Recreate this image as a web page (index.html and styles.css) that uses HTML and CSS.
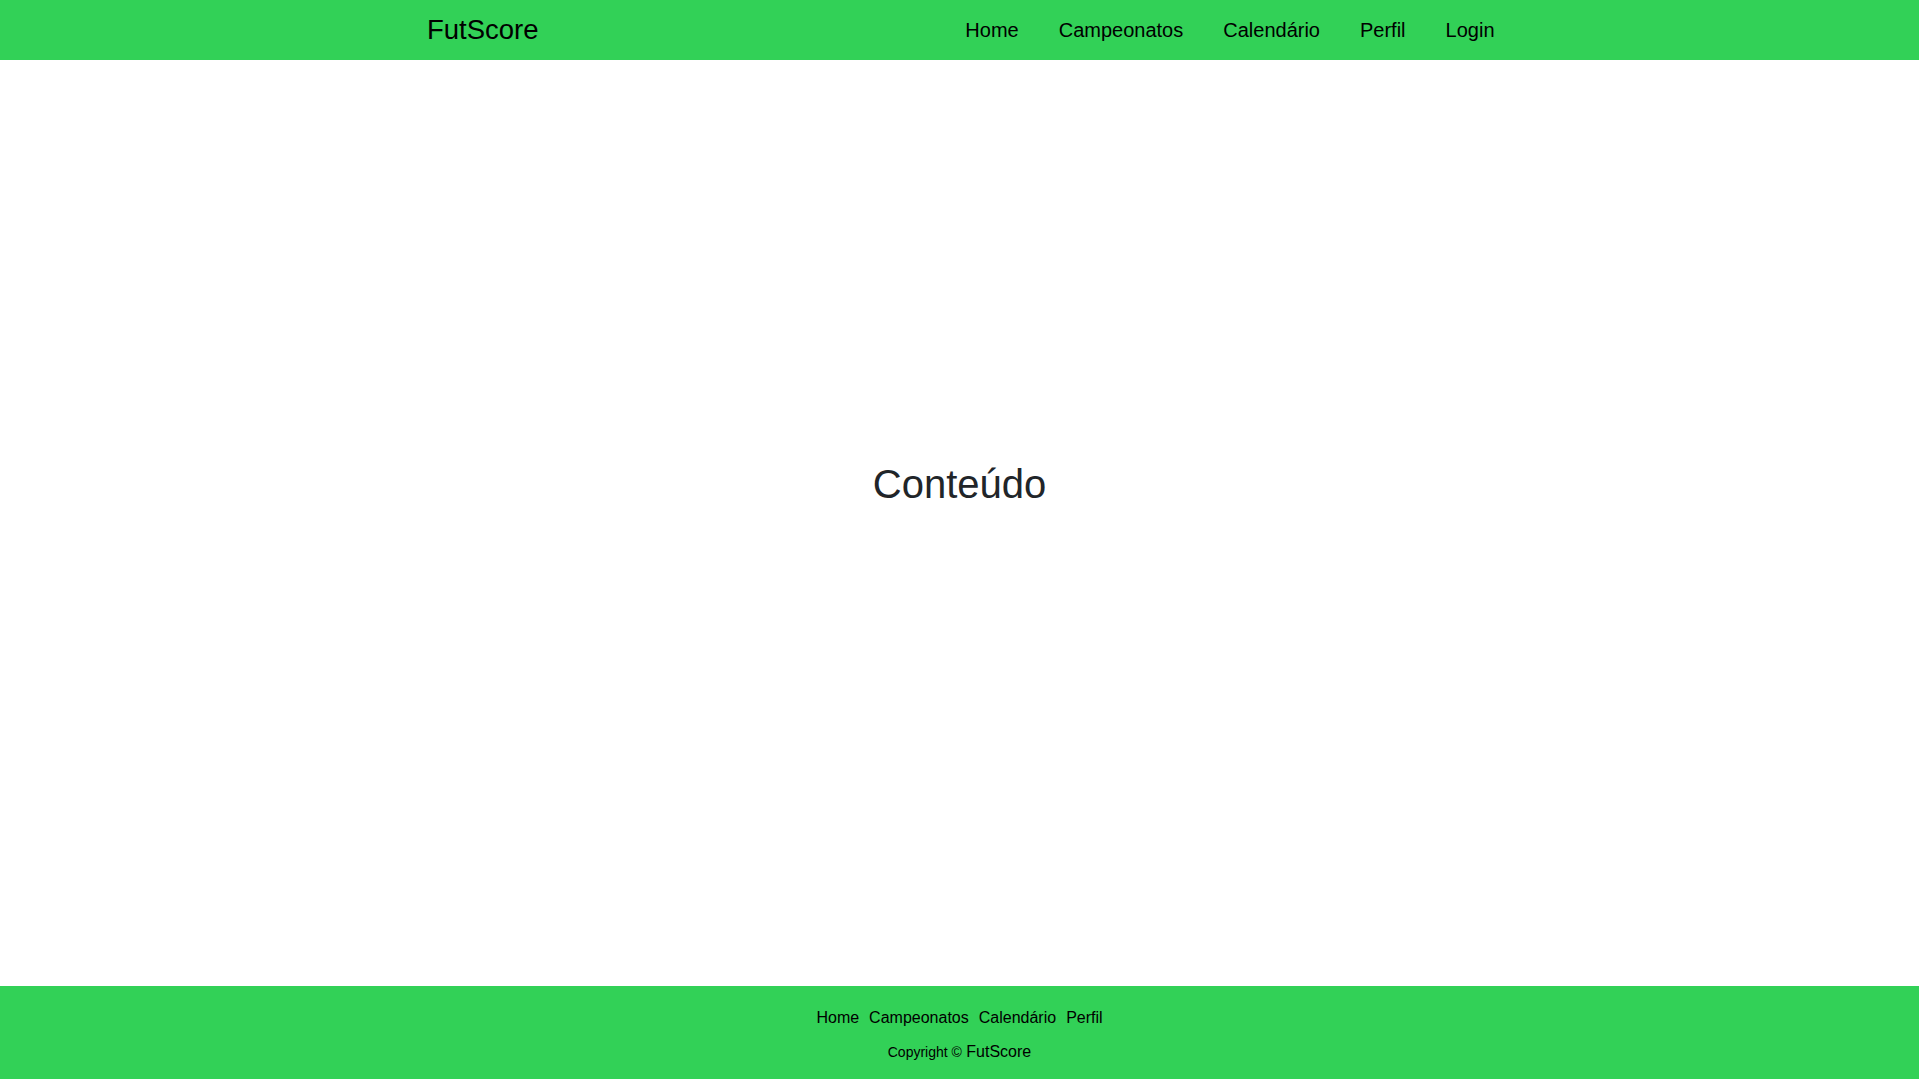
FILE: index.html
```html
<!DOCTYPE html>
<html lang="pt-BR">
<head>
<meta charset="utf-8">
<title>FutScore</title>
<link rel="stylesheet" href="styles.css">
</head>
<body>
<div class="page">
  <header class="topbar">
    <div class="container">
      <a class="brand" href="#">FutScore</a>
      <nav class="nav">
        <a href="#">Home</a>
        <a href="#">Campeonatos</a>
        <a href="#">Calendário</a>
        <a href="#">Perfil</a>
        <a href="#">Login</a>
      </nav>
    </div>
  </header>
  <main class="main">
    <h1 class="title">Conteúdo</h1>
  </main>
  <footer class="footer">
    <nav class="footer-nav">
      <a href="#">Home</a>
      <a href="#">Campeonatos</a>
      <a href="#">Calendário</a>
      <a href="#">Perfil</a>
    </nav>
    <p class="copy"><span class="copy-small">Copyright ©</span> FutScore</p>
  </footer>
</div>
</body>
</html>
```

FILE: styles.css
```css
* { box-sizing: border-box; }
html, body { margin: 0; padding: 0; }
body {
  font-family: "Liberation Sans", Arial, sans-serif;
  color: #212529;
  background: #fff;
}
a { text-decoration: none; color: #000; }
.page {
  display: flex;
  flex-direction: column;
  min-height: 1079px;
}
.topbar {
  background: #32d157;
  height: 60px;
}
.container {
  width: 1110px;
  margin: 0 auto;
  height: 60px;
  display: flex;
  align-items: flex-start;
  justify-content: space-between;
}
.brand {
  font-size: 27.5px;
  line-height: 59px;
  margin-left: 22.5px;
  color: #000;
}
.nav {
  display: flex;
}
.nav a {
  font-size: 20px;
  line-height: 60px;
  padding: 0 20px;
  color: #000;
}
.main {
  flex: 1;
  display: flex;
  justify-content: center;
  align-items: flex-start;
  padding-top: 400px;
}
.title {
  margin: 0;
  font-size: 40px;
  line-height: 48px;
  font-weight: 400;
  color: #212529;
}
.footer {
  background: #32d157;
  height: 93px;
  display: flex;
  flex-direction: column;
  align-items: center;
  padding-top: 21px;
}
.footer-nav {
  display: flex;
  gap: 10px;
}
.footer-nav a {
  font-size: 16px;
  line-height: 22px;
  color: #000;
}
.copy {
  margin: 12px 0 0;
  font-size: 16px;
  line-height: 22px;
  color: #000;
}
.copy-small { font-size: 14px; }
```
